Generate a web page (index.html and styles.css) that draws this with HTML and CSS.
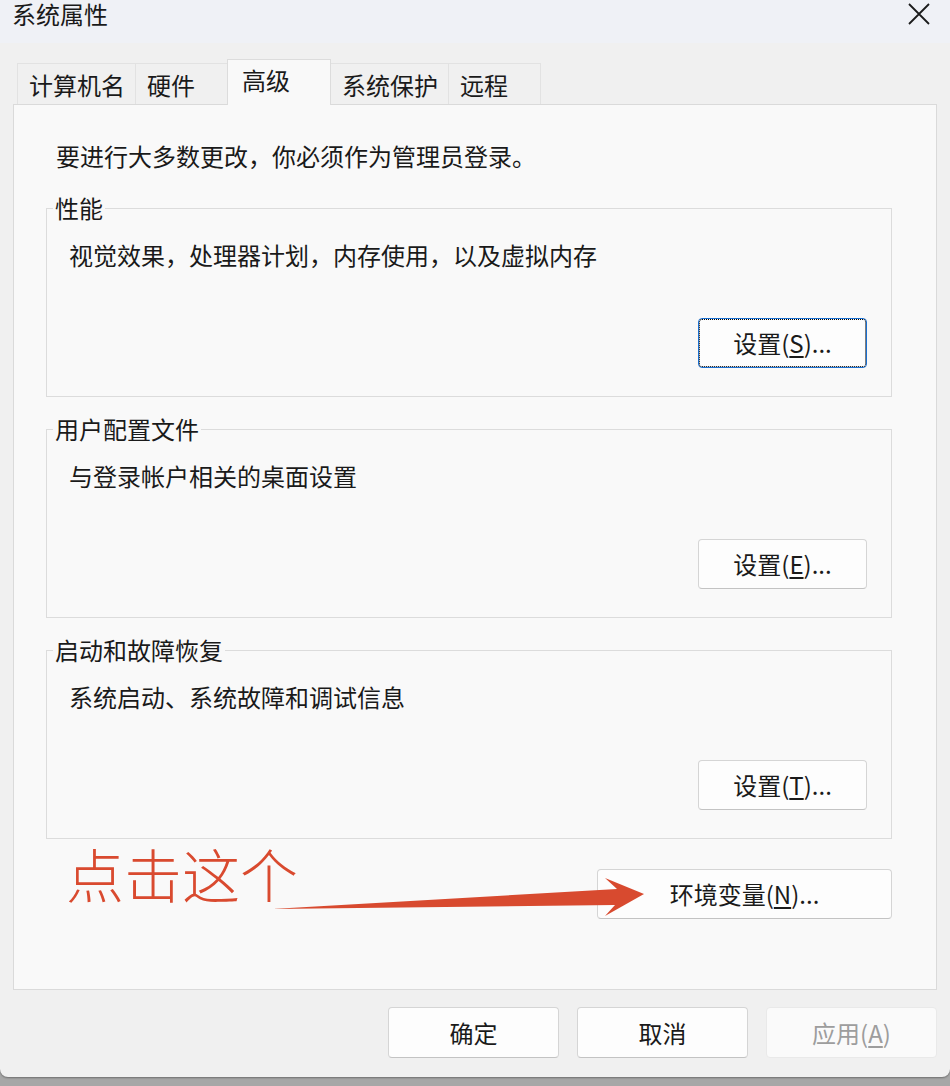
FILE: index.html
```html
<!DOCTYPE html>
<html lang="zh-CN">
<head>
    <meta charset="UTF-8">
    <meta name="viewport" content="width=device-width, initial-scale=1.0">
    <title>系统属性</title>
    <link rel="stylesheet" href="styles.css">
</head>
<body>
    <div class="window">
        <div class="titlebar">
            <span class="title">系统属性</span>
            <svg class="close" width="24" height="22" viewBox="0 0 24 22">
                <path d="M2 1 L22 21 M22 1 L2 21" stroke="#1b1b1b" stroke-width="1.8" fill="none"/>
            </svg>
        </div>

        <div class="tabs">
            <div class="tab">计算机名</div>
            <div class="tab">硬件</div>
            <div class="tab active">高级</div>
            <div class="tab">系统保护</div>
            <div class="tab">远程</div>
        </div>

        <div class="panel">
            <p class="intro">要进行大多数更改，你必须作为管理员登录。</p>

            <fieldset class="group">
                <legend>性能</legend>
                <p>视觉效果，处理器计划，内存使用，以及虚拟内存</p>
                <div class="actions">
                    <button class="btn focused">设置(<u>S</u>)...</button>
                </div>
            </fieldset>

            <fieldset class="group">
                <legend>用户配置文件</legend>
                <p>与登录帐户相关的桌面设置</p>
                <div class="actions">
                    <button class="btn">设置(<u>E</u>)...</button>
                </div>
            </fieldset>

            <fieldset class="group">
                <legend>启动和故障恢复</legend>
                <p>系统启动、系统故障和调试信息</p>
                <div class="actions">
                    <button class="btn">设置(<u>T</u>)...</button>
                </div>
            </fieldset>

            <div class="env-row">
                <button class="btn wide">环境变量(<u>N</u>)...</button>
            </div>

            <!-- red hint pointing at the env button -->
            <div class="note">点击这个</div>
            <svg class="arrow" width="390" height="52" viewBox="269 870 390 52">
                <polygon points="272,909 617,889 605,878 644,894 605,916 615,905" fill="#d84a2f"/>
            </svg>
        </div>

        <div class="footer">
            <button class="btn big">确定</button>
            <button class="btn big">取消</button>
            <button class="btn big" disabled>应用(<u>A</u>)</button>
        </div>
    </div>
</body>
</html>
```

FILE: styles.css
```css
body {
    margin: 0;
    padding: 0;
    height: 1086px;
    background-color: #a7a7a7;
    font-family: "Noto Sans CJK SC", sans-serif;
    font-size: 24px;
    color: #1a1a1a;
    overflow: hidden;
}

.window {
    height: 1077px;
    display: flex;
    flex-direction: column;
    background-color: #f0f0f0;
    border-radius: 0 0 8px 8px;
    box-shadow: 0 1px 2px rgba(0, 0, 0, 0.35);
}

.titlebar {
    height: 43px;
    flex-shrink: 0;
    display: flex;
    justify-content: space-between;
    align-items: flex-start;
    padding: 0 19px 0 12px;
    background-color: #eff1f6;
}

.title {
    line-height: 28px;
}

.close {
    margin-top: 3px;
}

/* tab strip */
.tabs {
    display: flex;
    align-items: flex-end;
    margin: 16px 0 0 17px;
}

.tab {
    box-sizing: border-box;
    min-width: 93px;
    height: 41px;
    padding: 5px 10px 0 11px;
    margin-right: -1px;
    border: 1px solid #e2e2e2;
    border-bottom: none;
    background-color: #f0f0f0;
    line-height: 32px;
}

.tab.active {
    position: relative;
    z-index: 1;
    min-width: 104px;
    height: 46px;
    padding: 4px 10px 0 14px;
    margin-bottom: -1px;
    border-color: #dcdcdc;
    background-color: #f9f9f9;
}

/* tab page */
.panel {
    position: relative;
    flex: 1;
    margin: 0 13px;
    padding: 35px 44px 0 32px;
    border: 1px solid #dadada;
    background-color: #f9f9f9;
}

.intro {
    margin: 0 0 21px 10px;
    line-height: 32px;
}

.group {
    margin: 0 0 17px;
    padding: 16px 24px 28px 22px;
    min-width: 0;
    border: 1px solid #dcdcdc;
}

.group legend {
    margin-left: -16px;
    padding: 0 2px;
    line-height: 30px;
}

.group p {
    margin: 0;
    line-height: 32px;
}

.actions {
    display: flex;
    justify-content: flex-end;
    margin-top: 47px;
}

.env-row {
    display: flex;
    justify-content: flex-end;
    margin-top: 30px;
}

.btn {
    box-sizing: border-box;
    width: 169px;
    height: 50px;
    padding: 0;
    font-family: inherit;
    font-size: 24px;
    line-height: 1;
    color: #1a1a1a;
    background-color: #fdfdfd;
    border: 1px solid #d5d5d5;
    border-bottom-color: #c3c3c3;
    border-radius: 4px;
}

.btn u {
    text-underline-offset: 3px;
}

.btn.focused {
    border-color: #1a6fd0;
    outline: 1px dotted #000;
    outline-offset: -2px;
}

.btn.wide {
    width: 295px;
}

.btn.big {
    width: 171px;
    height: 51px;
}

.btn:disabled {
    color: #9d9d9d;
    background-color: #fafafa;
    border-color: #e9e9e9;
}

.footer {
    flex-shrink: 0;
    display: flex;
    justify-content: flex-end;
    gap: 18px;
    padding: 17px 13px 19px;
}

.note {
    position: absolute;
    left: 52px;
    top: 739px;
    font-size: 58px;
    line-height: 58px;
    font-weight: 300;
    color: #d94a2f;
}

.arrow {
    position: absolute;
    left: 255px;
    top: 765px;
}
```
